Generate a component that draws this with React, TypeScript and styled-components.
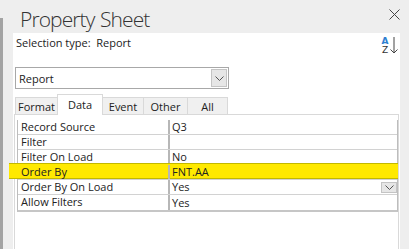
import React from 'react';
import styled, { createGlobalStyle } from 'styled-components';

const Global = createGlobalStyle`
    html, body {
        margin: 0;
        padding: 0;
        background: #eeeeee;
    }
    body {
        width: 409px;
        height: 249px;
        overflow: hidden;
        font-family: "Open Sans", "Noto Sans", sans-serif;
        color: #222;
    }
`;

const Window = styled.div`
    display: flex;
    flex-direction: row;
    width: 409px;
    height: 249px;
`;

const Rail = styled.div`
    width: 3px;
    margin-top: 18px;
    background: #a3a3a3;
`;

const Main = styled.div`
    flex: 1;
    display: flex;
    flex-direction: column;
`;

const Header = styled.div`
    height: 33px;
    display: flex;
    flex-direction: row;
    justify-content: space-between;
    align-items: flex-start;
    padding-left: 17px;
    padding-right: 9px;
`;

const Title = styled.h1`
    margin: 0;
    font-size: 21px;
    font-weight: 300;
    line-height: 33px;
    margin-top: 3px;
    color: #333;
    letter-spacing: -0.9px;
    word-spacing: 1px;
`;

const Close = styled.div`
    margin-top: 3px;
    width: 11px;
    height: 11px;
`;

const Panel = styled.div`
    flex: 1;
    margin-left: 10px;
    margin-right: 9px;
    background: #fff;
    display: flex;
    flex-direction: column;
`;

const SelectionRow = styled.div`
    height: 34px;
    display: flex;
    flex-direction: row;
    justify-content: space-between;
    align-items: flex-start;
    padding-left: 3px;
    padding-right: 2px;
    font-size: 11px;
`;

const SelectionText = styled.span`
    margin-top: 2px;
    white-space: pre;
`;

const SortIcon = styled.div`
    margin-top: 4px;
    display: flex;
    flex-direction: row;
    align-items: flex-start;
    gap: 1px;
`;

const SortLetters = styled.div`
    display: flex;
    flex-direction: column;
    align-items: center;
    font-family: "DejaVu Sans", sans-serif;
    font-size: 9px;
    line-height: 8px;
    width: 8px;
`;

const Letter = styled.span<{ $blue?: boolean }>`
    color: ${p => p.$blue ? '#2f7fd0' : '#333'};
    font-weight: ${p => p.$blue ? 700 : 400};
    height: 9px;
`;

const Combo = styled.div`
    margin-left: 2px;
    width: 214px;
    height: 22px;
    box-sizing: border-box;
    border: 1px solid #a8a8a8;
    display: flex;
    flex-direction: row;
    align-items: center;
    justify-content: space-between;
    padding-left: 3px;
    padding-right: 1px;
    font-size: 11px;
`;

const DropButton = styled.div<{ $small?: boolean }>`
    width: 16px;
    height: ${p => p.$small ? 11 : 18}px;
    box-sizing: border-box;
    background: #e6e6e6;
    border: 1px solid #c4c4c4;
    display: flex;
    align-items: center;
    justify-content: center;
`;

const TabStrip = styled.div`
    margin-top: 5px;
    margin-left: 2px;
    display: flex;
    flex-direction: row;
    align-items: flex-end;
    height: 21px;
`;

const Tab = styled.div<{ $active?: boolean; $w: number }>`
    width: ${p => p.$w}px;
    height: ${p => p.$active ? 21 : 18}px;
    box-sizing: border-box;
    background: ${p => p.$active ? '#fff' : '#f0f0f0'};
    border: 1px solid #d9d9d9;
    border-bottom: ${p => p.$active ? 'none' : '1px solid #d9d9d9'};
    margin-right: -1px;
    display: flex;
    align-items: ${p => p.$active ? 'flex-start' : 'center'};
    justify-content: center;
    padding-top: ${p => p.$active ? 2 : 0}px;
    font-size: 11px;
    position: relative;
    z-index: ${p => p.$active ? 1 : 0};
`;

const TabBody = styled.div`
    flex: 1;
    margin-left: 1px;
    margin-right: 1px;
    margin-top: -1px;
    border: 1px solid #d9d9d9;
    border-bottom: none;
    padding: 5px 0 0 2px;
`;

const Grid = styled.div`
    display: flex;
    flex-direction: column;
    border-left: 1px solid #bdbdbd;
    border-right: 1px solid #bdbdbd;
    border-bottom: 2px solid #c6c6c6;
`;

const Row = styled.div<{ $marked?: boolean }>`
    position: relative;
    height: 15px;
    display: grid;
    grid-template-columns: 152px 1fr;
    font-size: 11px;
    line-height: 14px;
    border-bottom: 1px solid #d2d2d2;
    box-sizing: border-box;
    &:last-child {
        border-bottom: none;
    }
    ${p => p.$marked ? `
        &::before {
            content: '';
            position: absolute;
            left: -9px;
            right: -1px;
            top: -2px;
            bottom: 0;
            background: #ffe900;
            border-top: 1px solid #c2b800;
            border-bottom: 1px solid #c2b800;
        }
    ` : ''}
`;

const Label = styled.div`
    position: relative;
    padding-left: 3px;
    border-right: 2px solid #b7b7b7;
    white-space: nowrap;
`;

const Value = styled.div`
    position: relative;
    padding-left: 2px;
    display: flex;
    justify-content: space-between;
    align-items: center;
`;

const Chevron = () => (
    <svg width="9" height="5" viewBox="0 0 9 5">
        <path d="M0.5 0.5 L4.5 4.5 L8.5 0.5" fill="none" stroke="#555" strokeWidth="1" />
    </svg>
);

const rows = [
    { name: 'Record Source', value: 'Q3' },
    { name: 'Filter', value: '' },
    { name: 'Filter On Load', value: 'No' },
    { name: 'Order By', value: 'FNT.AA', marked: true },
    { name: 'Order By On Load', value: 'Yes', drop: true },
    { name: 'Allow Filters', value: 'Yes' },
];

const tabs = [
    { label: 'Format', w: 43 },
    { label: 'Data', w: 46, active: true },
    { label: 'Event', w: 42 },
    { label: 'Other', w: 45 },
    { label: 'All', w: 41 },
];

export default function App() {
    return (
        <Window>
            <Global />
            <Rail />
            <Main>
                <Header>
                    <Title>Property Sheet</Title>
                    <Close>
                        <svg width="11" height="11" viewBox="0 0 11 11">
                            <path d="M0.5 0.5 L10.5 10.5 M10.5 0.5 L0.5 10.5" stroke="#444" strokeWidth="1" />
                        </svg>
                    </Close>
                </Header>
                <Panel>
                    <SelectionRow>
                        <SelectionText>Selection type:  Report</SelectionText>
                        <SortIcon>
                            <SortLetters>
                                <Letter $blue>A</Letter>
                                <Letter>Z</Letter>
                            </SortLetters>
                            <svg width="8" height="17" viewBox="0 0 8 17">
                                <path d="M4 0 L4 16 M0.5 12.5 L4 16 L7.5 12.5" fill="none" stroke="#444" strokeWidth="1" />
                            </svg>
                        </SortIcon>
                    </SelectionRow>
                    <Combo>
                        <span>Report</span>
                        <DropButton><Chevron /></DropButton>
                    </Combo>
                    <TabStrip>
                        {tabs.map(t => (
                            <Tab key={t.label} $w={t.w} $active={t.active}>{t.label}</Tab>
                        ))}
                    </TabStrip>
                    <TabBody>
                        <Grid>
                            {rows.map(r => (
                                <Row key={r.name} $marked={r.marked}>
                                    <Label>{r.name}</Label>
                                    <Value>
                                        <span>{r.value}</span>
                                        {r.drop && <DropButton $small><Chevron /></DropButton>}
                                    </Value>
                                </Row>
                            ))}
                        </Grid>
                    </TabBody>
                </Panel>
            </Main>
        </Window>
    );
}
